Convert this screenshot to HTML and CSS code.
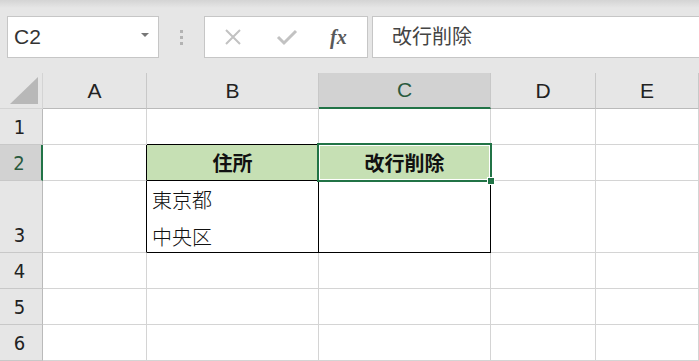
FILE: index.html
```html
<!DOCTYPE html>
<html>
    <head>
        <title>改行削除</title>
        <meta charset="utf-8">
        <link rel="stylesheet" href="styles.css">
    </head>
    <body>
        <div id="toolbar">
            <div class="namebox">
                <span>C2</span>
                <span class="arrow"></span>
            </div>
            <div class="grip"><i></i><i></i><i></i></div>
            <div class="buttons">
                <svg width="20" height="20" viewBox="0 0 20 20"><path d="M3 3 L17 17 M17 3 L3 17" stroke="#c2c2c2" stroke-width="2" fill="none"/></svg>
                <svg width="22" height="20" viewBox="0 0 22 20"><path d="M2 10 L8 16 L20 4" stroke="#c2c2c2" stroke-width="3" fill="none"/></svg>
                <span class="fx">fx</span>
            </div>
            <div class="formula">改行削除</div>
        </div>
        <div id="sheet">
            <div class="corner"><span class="tri"></span></div>
            <div class="colhead">A</div>
            <div class="colhead">B</div>
            <div class="colhead active">C</div>
            <div class="colhead">D</div>
            <div class="colhead">E</div>

            <div class="rowhead">1</div>
            <div class="cell"></div>
            <div class="cell edge-b"></div>
            <div class="cell edge-b"></div>
            <div class="cell"></div>
            <div class="cell"></div>

            <div class="rowhead active">2</div>
            <div class="cell edge-r"></div>
            <div class="cell table head">住所</div>
            <div class="cell table head selected">改行削除<span class="sel"><span class="handle"></span></span></div>
            <div class="cell"></div>
            <div class="cell"></div>

            <div class="rowhead tall">3</div>
            <div class="cell edge-r"></div>
            <div class="cell table lines">東京都<br>中央区</div>
            <div class="cell table"></div>
            <div class="cell"></div>
            <div class="cell"></div>

            <div class="rowhead">4</div>
            <div class="cell"></div>
            <div class="cell"></div>
            <div class="cell"></div>
            <div class="cell"></div>
            <div class="cell"></div>

            <div class="rowhead">5</div>
            <div class="cell"></div>
            <div class="cell"></div>
            <div class="cell"></div>
            <div class="cell"></div>
            <div class="cell"></div>

            <div class="rowhead">6</div>
            <div class="cell"></div>
            <div class="cell"></div>
            <div class="cell"></div>
            <div class="cell"></div>
            <div class="cell"></div>
        </div>
    </body>
</html>
```

FILE: styles.css
```css
body {
    margin: 0;
    background: white;
    font-family: "Noto Sans CJK JP", "Noto Sans", sans-serif;
    overflow: hidden;
}

#toolbar {
    height: 73px;
    box-sizing: border-box;
    padding: 16px 0 0 7px;
    display: flex;
    align-items: flex-start;
    background: linear-gradient(#d4d4d4 0px, #e6e6e6 8px, #e6e6e6);
}

.namebox {
    width: 152px;
    height: 42px;
    box-sizing: border-box;
    border: 1px solid #c6c6c6;
    background: white;
    display: flex;
    align-items: center;
    justify-content: space-between;
    padding: 0 9px 0 6px;
    font-family: "Liberation Sans", sans-serif;
    font-size: 21px;
    color: #333;
}

.arrow {
    width: 0;
    height: 0;
    border-left: 4px solid transparent;
    border-right: 4px solid transparent;
    border-top: 4px solid #777;
    margin-top: -4px;
}

.grip {
    width: 45px;
    height: 42px;
    display: flex;
    flex-direction: column;
    align-items: center;
    justify-content: center;
    gap: 3px;
}

.grip i {
    width: 3px;
    height: 3px;
    background: #b3b3b3;
}

.buttons {
    width: 164px;
    height: 42px;
    box-sizing: border-box;
    border: 1px solid #c6c6c6;
    background: white;
    display: flex;
    align-items: center;
    padding-left: 18px;
    gap: 33px;
}

.fx {
    font-family: "Liberation Serif", serif;
    font-style: italic;
    font-weight: bold;
    font-size: 20px;
    color: #595959;
    margin-left: -1px;
}

.formula {
    flex: 1;
    height: 42px;
    margin-left: 4px;
    box-sizing: border-box;
    border: 1px solid #c6c6c6;
    border-right: none;
    background: white;
    padding-left: 19px;
    line-height: 38px;
    font-size: 20px;
    color: #444;
}

#sheet {
    display: grid;
    grid-template-columns: 43px 104px 172px 172px 105px 1fr;
    grid-template-rows: 36px 36px 36px 72px 36px 36px 36px;
}

#sheet > div {
    box-sizing: border-box;
    border-right: 1px solid #d4d4d4;
    border-bottom: 1px solid #d4d4d4;
}

.corner {
    background: #e6e6e6;
    position: relative;
}

.tri {
    position: absolute;
    right: 4px;
    bottom: 4px;
    width: 0;
    height: 0;
    border-left: 28px solid transparent;
    border-bottom: 27px solid #b8b8b8;
}

#sheet > .colhead {
    background: #e6e6e6;
    border-right-color: #c8c8c8;
    border-bottom-color: #bababa;
    text-align: center;
    font-family: "Liberation Sans", sans-serif;
    font-size: 21px;
    line-height: 35px;
    color: #222;
}

#sheet > .colhead.active {
    background: #d2d2d2;
    color: #2a5a3e;
    border-bottom: 2px solid #217346;
    line-height: 34px;
}

#sheet > .rowhead {
    background: #e6e6e6;
    border-right-color: #bababa;
    border-bottom-color: #c8c8c8;
    text-align: center;
    font-family: "DejaVu Sans Condensed", "Liberation Sans Narrow", sans-serif;
    font-size: 20px;
    line-height: 36px;
    color: #222;
    padding-right: 3px;
}

#sheet > .rowhead.tall {
    line-height: 108px;
}

#sheet > .rowhead.active {
    background: #d2d2d2;
    color: #2a5a3e;
    border-right: 2px solid #217346;
}

#sheet > .edge-r {
    border-right-color: black;
}

#sheet > .edge-b {
    border-bottom-color: black;
}

#sheet > .table {
    border-right-color: black;
    border-bottom-color: black;
    font-size: 20px;
    color: #111;
}

.head {
    background: #c6e0b4;
    text-align: center;
    font-weight: bold;
    line-height: 35px;
}

.lines {
    padding: 0 0 0 5px;
    line-height: 37px;
    font-weight: 300;
}

.selected {
    position: relative;
}

.sel {
    position: absolute;
    top: -2px;
    left: -2px;
    right: -2px;
    bottom: -2px;
    border: 2px solid #217346;
    box-shadow: inset 0 0 0 1px white;
}

.handle {
    position: absolute;
    right: -5px;
    bottom: -5px;
    width: 6px;
    height: 6px;
    background: #217346;
    border: 1px solid white;
}
```
